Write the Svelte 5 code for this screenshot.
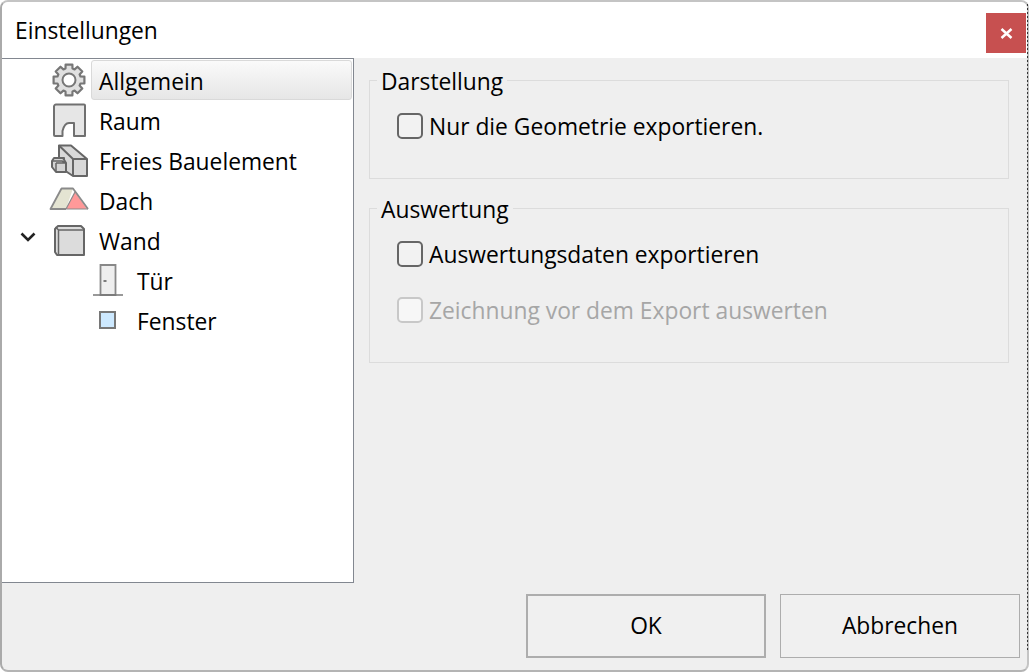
<script>
	const rows = [
		{ id: 'gear', label: 'Allgemein', level: 0, selected: true },
		{ id: 'room', label: 'Raum', level: 0 },
		{ id: 'block', label: 'Freies Bauelement', level: 0 },
		{ id: 'roof', label: 'Dach', level: 0 },
		{ id: 'wall', label: 'Wand', level: 0, open: true },
		{ id: 'door', label: 'Tür', level: 1 },
		{ id: 'window', label: 'Fenster', level: 1 }
	];

	const groups = [
		{
			title: 'Darstellung',
			items: [{ label: 'Nur die Geometrie exportieren.' }]
		},
		{
			title: 'Auswertung',
			items: [
				{ label: 'Auswertungsdaten exportieren' },
				{ label: 'Zeichnung vor dem Export auswerten', disabled: true }
			]
		}
	];

	// 8 teeth around the centre of a 34px box
	function gearPath() {
		let d = '';
		const n = 8;
		for (let i = 0; i < n; i++) {
			const a = (i / n) * Math.PI * 2 - Math.PI / 2;
			const pts = [
				[12, a - 0.3],
				[15.800, a - 0.22],
				[15.800, a + 0.22],
				[12, a + 0.3]
			];
			for (const [r, t] of pts) {
				const x = (17 + r * Math.cos(t)).toFixed(1);
				const y = (17 + r * Math.sin(t)).toFixed(1);
				d += (d ? 'L' : 'M') + x + ' ' + y;
			}
		}
		return d + 'z';
	}
</script>

<main class="dialog">
	<header class="titlebar">
		<h1>Einstellungen</h1>
		<button class="close" aria-label="Schließen">
			<svg width="13" height="11" viewBox="0 0 13 11">
				<path d="M1.500 1 11.500 10M11.500 1 1.500 10" stroke="#fff" stroke-width="2.500" fill="none" />
			</svg>
		</button>
	</header>

	<div class="body">
		<nav class="tree">
			{#each rows as row}
				<div class="row" class:child={row.level === 1}>
					<span class="twisty">
						{#if row.open}
							<svg width="16" height="10" viewBox="0 0 16 10">
								<path d="M1.500 1.500 8 8l6.500-6.500" stroke="#222" stroke-width="2.600" fill="none" />
							</svg>
						{/if}
					</span>
					<span class="icon">
						{#if row.id === 'gear'}
							<svg width="34" height="34" viewBox="0 0 34 34">
								<path d={gearPath()} fill="#e0e0e0" stroke="#777" stroke-width="2.200" stroke-linejoin="round" />
								<circle cx="17" cy="17" r="6.500" fill="#fff" stroke="#777" stroke-width="2" />
							</svg>
						{:else if row.id === 'room'}
							<svg width="34" height="34" viewBox="0 0 34 34">
								<path
									d="M4 1.500h28a1 1 0 0 1 1 1V33H22V20h-5c-4 0-5.500 4-6.500 8v5H3a1 1 0 0 1-1-1V3.500a2 2 0 0 1 2-2z"
									fill="#e6e6e6" stroke="#707070" stroke-width="2" stroke-linejoin="round" />
							</svg>
						{:else if row.id === 'block'}
							<svg width="37" height="33" viewBox="1 0 37 33">
								<path d="M9 1.500h12L37 15v17H23L14 26V14H9z" fill="#d8d8d8" stroke="#666" stroke-width="2" stroke-linejoin="round" />
								<path d="M9 1.500 23 15h14M23 15v17" fill="none" stroke="#666" stroke-width="2" />
								<path d="M9 1.500V13" fill="none" stroke="#666" stroke-width="2" />
								<path d="M4 14h9l3 5v9H6l-4-5v-6z" fill="#d4d4d4" stroke="#666" stroke-width="2" stroke-linejoin="round" />
								<path d="M3 17h9l4 2M6 19h10M6 19v9" fill="none" stroke="#666" stroke-width="1.500" />
							</svg>
						{:else if row.id === 'roof'}
							<svg class="roof" width="40" height="24" viewBox="0 0 40 24">
								<path d="M1.500 22 12.500 1.500H24L17 22z" fill="#e4e4d2" />
								<path d="M17 22l9-17 12 17z" fill="#ff9999" />
								<path d="M17 22H1.500L12.500 1.500H24L39 22" fill="none" stroke="#8a8a8a" stroke-width="1.800" stroke-linejoin="round" />
								<path d="M17 22h22M17 22 26 5" fill="none" stroke="#8a8a8a" stroke-width="1.200" />
							</svg>
						{:else if row.id === 'wall'}
							<svg width="31" height="31" viewBox="0 0 31 31">
								<path d="M4 1h23l3 3v26H3l-2-3V4z" fill="#dcdcdc" stroke="#666" stroke-width="2" stroke-linejoin="round" />
								<path d="M1.500 2 4.500 5V30M4.500 5H30" fill="none" stroke="#666" stroke-width="1.500" />
							</svg>
						{:else if row.id === 'door'}
							<svg width="32" height="32" viewBox="0 0 32 32">
								<path d="M8.500 1h15v30h-15z" fill="#eee" stroke="#888" stroke-width="1.800" />
								<path d="M11.500 17h3" stroke="#555" stroke-width="1.500" />
								<path d="M1 31h30" stroke="#777" stroke-width="1.500" />
							</svg>
						{:else}
							<svg width="18" height="18" viewBox="0 0 18 18">
								<rect x="1" y="1" width="15" height="16" fill="#cde9ff" stroke="#777" stroke-width="2" />
							</svg>
						{/if}
					</span>
					<span class="label" class:selected={row.selected}>{row.label}</span>
				</div>
			{/each}
		</nav>

		<section class="panel">
			{#each groups as group}
				<fieldset>
					<legend>{group.title}</legend>
					{#each group.items as item}
						<label class="check" class:disabled={item.disabled}>
							<span class="box"></span>
							<span>{item.label}</span>
						</label>
					{/each}
				</fieldset>
			{/each}
		</section>
	</div>

	<footer class="actions">
		<button class="btn primary">OK</button>
		<button class="btn">Abbrechen</button>
	</footer>
</main>

<style>
	:global(body) {
		margin: 0;
		background: #fff;
	}

	.dialog {
		position: relative;
		box-sizing: border-box;
		width: 1029px;
		height: 672px;
		display: flex;
		flex-direction: column;
		background: #efefef;
		border: 2px solid #c4c4c4;
		border-left-color: #aaa;
		border-bottom-color: #b4b4b4;
		border-radius: 8px;
		font-family: "Open Sans", "Noto Sans", sans-serif;
		font-size: 22.800px;
		color: #000;
	}

	/* dotted edge of the window behind, shows at the right side */
	.dialog::after {
		content: '';
		position: absolute;
		top: 2px;
		bottom: 20px;
		right: -1px;
		width: 1px;
		background: repeating-linear-gradient(#333 0 2px, #ccc 2px 4px);
	}

	.titlebar {
		height: 56px;
		flex: none;
		display: flex;
		align-items: flex-start;
		justify-content: space-between;
		background: #fff;
		border-radius: 6px 6px 0 0;
	}

	h1 {
		margin: 14px 0 0 13px;
		font-size: 22.800px;
		font-weight: 400;
		line-height: 30px;
	}

	.close {
		width: 40px;
		height: 40px;
		margin: 11px 1px 0 0;
		padding: 0;
		border: 0;
		background: #c75050;
		display: flex;
		align-items: center;
		justify-content: center;
	}

	.body {
		flex: none;
		height: 525px;
		display: flex;
	}

	.tree {
		box-sizing: border-box;
		width: 352px;
		height: 525px;
		padding-top: 1px;
		background: #fff;
		border: 1px solid #828790;
		border-left: 0;
	}

	.row {
		height: 40px;
		display: flex;
		align-items: center;
	}

	.twisty {
		width: 27px;
		margin: 0 0 7px 18px;
		display: flex;
		flex: none;
	}

	.icon {
		width: 44px;
		display: flex;
		justify-content: center;
		flex: none;
	}

	.roof {
		margin-bottom: 3px;
	}

	.child .twisty {
		width: 67px;
	}

	.child .icon {
		width: 42px;
	}

	.label {
		box-sizing: border-box;
		height: 40px;
		line-height: 41px;
		padding: 0 7px;
		border: 1px solid transparent;
		border-radius: 3px;
	}

	.label.selected {
		flex: 1;
		margin-right: 1px;
		border-color: #d9d9d9;
		background: linear-gradient(#fafafa, #e6e6e6);
	}

	.panel {
		flex: 1;
		padding: 5px 18px 0 15px;
	}

	fieldset {
		box-sizing: border-box;
		height: 116px;
		margin: 0 0 12px;
		padding: 0;
		border: 1px solid #dcdcdc;
	}

	fieldset:last-child {
		height: 172px;
	}

	legend {
		margin-left: 7px;
		padding: 4px 4px 0;
		line-height: 30px;
	}

	.check {
		display: flex;
		align-items: center;
		gap: 6px;
		height: 56px;
		padding-left: 27px;
	}

	.check:first-of-type {
		margin-top: 1px;
	}

	.box {
		box-sizing: border-box;
		width: 26px;
		height: 26px;
		border: 2px solid #666;
		border-radius: 5px;
		background: #f2f2f2;
	}

	.disabled {
		color: #a6a6a6;
	}

	.disabled .box {
		border-color: #c8c8c8;
		background: #f7f7f7;
	}

	.actions {
		flex: 1;
		display: flex;
		justify-content: flex-end;
		gap: 14px;
		padding: 11px 7px 0 0;
	}

	.btn {
		box-sizing: border-box;
		width: 240px;
		height: 64px;
		padding-bottom: 3px;
		background: #f0f0f0;
		border: 1px solid #adadad;
		font: inherit;
		color: inherit;
	}

	.btn.primary {
		border: 2px solid #adadad;
	}
</style>
